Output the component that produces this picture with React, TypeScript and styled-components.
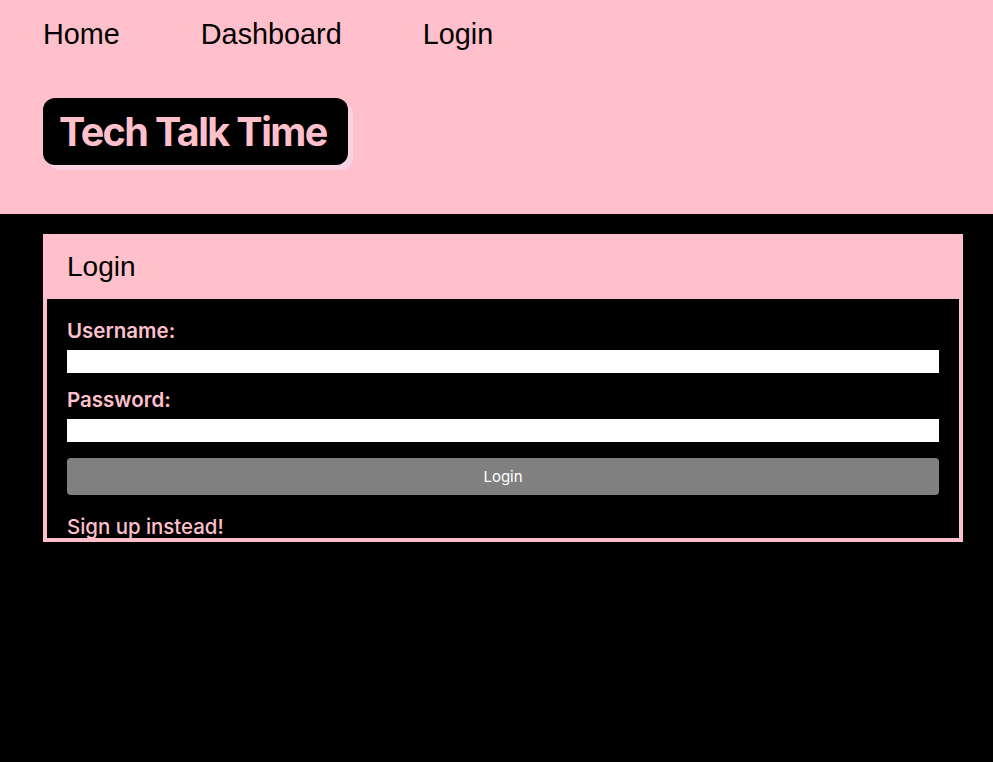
import styled, { createGlobalStyle } from 'styled-components'

const pink = '#ffc0cb'

const GlobalStyle = createGlobalStyle`
  html, body {
    margin: 0;
    padding: 0;
    background: #000;
  }
  body {
    font-family: 'Liberation Sans', Arial, sans-serif;
  }
`

export default function App() {
  return (
    <Page>
      <GlobalStyle />
      <Header>
        <Nav>
          <NavLink href="#">Home</NavLink>
          <NavLink href="#">Dashboard</NavLink>
          <NavLink href="#">Login</NavLink>
        </Nav>
        <Title>Tech Talk Time</Title>
      </Header>
      <Main>
        <Card>
          <CardHeader>Login</CardHeader>
          <CardBody>
            <Form onSubmit={(e) => e.preventDefault()}>
              <Label htmlFor="username">Username:</Label>
              <Input id="username" type="text" />
              <Label htmlFor="password">Password:</Label>
              <Input id="password" type="password" />
              <Button type="submit">Login</Button>
            </Form>
            <SignUp href="#">Sign up instead!</SignUp>
          </CardBody>
        </Card>
      </Main>
    </Page>
  )
}

const Page = styled.div`
  min-height: 762px;
  background: #000;
`

const Header = styled.header`
  background: ${pink};
  height: 214px;
  box-sizing: border-box;
  padding: 0 43px;
  display: flex;
  flex-direction: column;
  align-items: flex-start;
`

const Nav = styled.nav`
  display: flex;
  gap: 81px;
  padding-top: 17px;
  height: 64px;
  box-sizing: border-box;
`

const NavLink = styled.a`
  color: #000;
  text-decoration: none;
  font-family: 'Liberation Sans', Arial, sans-serif;
  font-size: 28.8px;
  line-height: 34px;
`

const Title = styled.h1`
  margin: 34px 0 0;
  background: #000;
  color: ${pink};
  font-family: Inter, 'Liberation Sans', sans-serif;
  font-weight: 700;
  font-size: 39.5px;
  line-height: 67px;
  padding: 1px 21px 0 16px;
  height: 67px;
  box-sizing: border-box;
  border-radius: 12px;
  box-shadow: 5px 5px 0 #f6d2e3;
  letter-spacing: -1.6px;
`

const Main = styled.main`
  padding: 20px 30px 0 43px;
`

const Card = styled.section`
  border: 4px solid ${pink};
  box-sizing: border-box;
  width: 920px;
`

const CardHeader = styled.h2`
  margin: 0;
  background: ${pink};
  color: #000;
  height: 61px;
  line-height: 57px;
  padding: 0 20px;
  font-family: 'Liberation Sans', Arial, sans-serif;
  font-weight: 400;
  font-size: 28px;
`

const CardBody = styled.div`
  height: 239px;
  overflow: hidden;
  box-sizing: border-box;
  padding: 20px 20px 0;
  background: #000;
`

const Form = styled.form`
  display: flex;
  flex-direction: column;
`

const Label = styled.label`
  color: ${pink};
  font-family: Inter, 'Liberation Sans', sans-serif;
  font-weight: 600;
  font-size: 20.5px;
  line-height: 24px;
  margin-bottom: 7px;
`

const Input = styled.input`
  height: 23px;
  box-sizing: border-box;
  border: none;
  background: #fff;
  margin: 0 0 15px;
  padding: 0 4px;
  outline: none;
`

const Button = styled.button`
  margin-top: 1px;
  height: 37px;
  border: none;
  border-radius: 4px;
  background: #808080;
  color: #fff;
  font-family: Inter, 'Liberation Sans', sans-serif;
  font-size: 15px;
`

const SignUp = styled.a`
  display: block;
  margin-top: 20px;
  color: ${pink};
  text-decoration: none;
  font-family: Inter, 'Liberation Sans', sans-serif;
  font-weight: 500;
  font-size: 20.4px;
  line-height: 24px;
`
